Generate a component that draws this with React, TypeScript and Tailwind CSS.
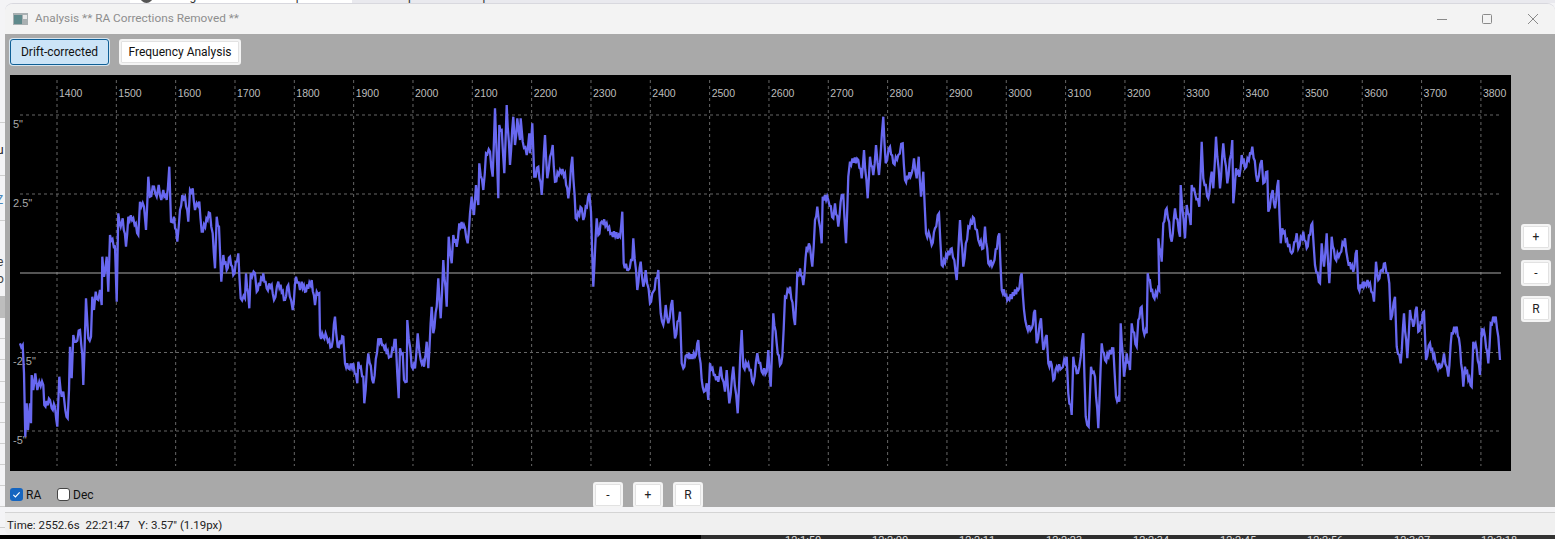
const toPoints = (ox: number, oy: number, raw: number[]) => {
  const out: [number, number][] = [];
  for (let i = 0; i < raw.length; i += 2) {
    out.push([ox + raw[i] / 3, oy + raw[i + 1] / 3]);
  }
  return out;
};

// the trace is coarser than the real 1px samples, so fill gaps with a bit of wiggle
const densify = (pts: [number, number][]) => {
  const out: string[] = [];
  pts.forEach(([x, y], i) => {
    out.push(`${x.toFixed(1)},${y.toFixed(1)}`);
    const next = pts[i + 1];
    if (!next) return;
    const n = Math.floor(Math.abs(next[0] - x) / 1.1);
    for (let k = 1; k < n; k++) {
      const t = k / n;
      const amp = 1.2 + 2.2 * Math.abs(Math.sin(i * 7.3 + k * 2.1));
      const wy = y + (next[1] - y) * t + (k % 2 ? amp : -amp);
      out.push(`${(x + (next[0] - x) * t).toFixed(1)},${wy.toFixed(1)}`);
    }
  });
  return out.join(" ");
};

// traced from the reference, in 3x crop coords
const traceA = [60,730,68,735,72,820,76,1010,80,910,84,990,90,910,93,970,95,825,100,870,106,820,112,870,118,845,130,855,133,915,150,900,155,925,165,920,172,980,178,830,185,890,190,875,196,930,203,955,207,870,210,740,215,835,220,705,228,725,240,690,247,765,250,855,258,595,265,715,273,710,277,590,282,630,287,575,295,600,300,570,305,615,307,470,312,530,320,470,325,575,330,405,345,440,350,605,355,340,362,380,368,355,378,440,385,350,400,355,415,405,420,305,432,320,438,390,445,230,450,290,462,260,470,290,476,255,484,300,490,270,500,300,508,200,513,365,522,350,532,425,540,330,547,285,555,290,565,365,570,270,578,265,585,330,590,310,598,305,605,395,630,340,638,400,645,505,650,350,657,380,664,545,670,465,680,510,690,470,700,525,715,460,722,595,735,595,738,520,748,625,752,520,765,520,770,575,790,520,800,565,815,555,822,600,835,545,855,600,865,555,878,630,888,530,900,570,905,545,915,575,935,540,945,615,950,575,958,580,960,705,970,710,980,710,995,740,1005,650,1013,740,1030,710,1035,790,1045,805,1060,790,1072,850,1075,785,1090,830,1093,910,1105,760,1120,850,1135,715,1150,735,1170,770,1187,720,1196,895];
const traceB = [0,775,8,790,12,870,20,875,22,690,35,830,45,835,53,730,62,810,72,830,80,755,85,835,95,650,100,730,110,650,115,565,122,685,130,510,140,650,146,440,155,520,160,435,170,470,178,400,195,415,203,460,210,370,215,320,222,375,228,285,235,345,238,220,250,300,258,190,270,185,278,260,285,55,295,325,298,105,305,120,313,250,320,45,330,225,340,80,345,165,352,85,360,150,362,85,368,155,380,195,388,130,390,190,397,100,403,260,415,230,425,315,435,135,442,265,450,200,458,165,465,275,480,240,495,250,505,325,517,200,527,385,545,355,550,390,568,310,573,365,580,590,590,385,595,435,605,395,620,400,635,430,660,440,667,365,671,520,685,540,697,510,700,445,712,600,722,515,730,590,737,540,750,640,760,605,775,540,782,670,790,705,797,645,805,700,817,630,825,745,840,665,845,820,850,835,860,795,885,800,895,750,905,870,912,905,920,880,925,930,930,820,945,855,955,875,962,830,975,905,980,840,988,940,1000,830,1013,970,1025,720,1030,830,1045,820,1060,880,1072,790,1085,845,1100,845,1105,780,1112,890,1120,670,1130,760,1140,825,1147,800,1155,620,1170,590,1185,705,1192,550,1200,540];
const traceC = [0,505,10,555,20,440,30,440,37,500,45,360,52,320,65,430,68,290,85,300,100,355,105,310,115,380,125,285,130,285,138,430,145,230,150,185,175,180,185,235,192,150,203,295,210,170,220,225,228,135,237,225,250,50,257,190,270,140,280,190,295,165,308,130,315,240,335,220,342,175,350,235,356,170,363,290,370,215,378,400,390,410,395,435,405,385,417,340,425,495,455,445,463,480,470,540,480,360,490,500,505,380,522,355,535,420,550,445,555,380,565,490,580,490,598,400,605,570,625,595,655,570,665,520,672,630,680,680,695,685,705,630,710,730,723,655,730,750,740,705,745,790,755,795,760,840,770,800,785,805,800,770,805,880,815,945,820,770,830,820,838,800,850,700,857,950,866,980,873,800,885,830,895,985,905,730,915,780,940,745,948,890,958,905,962,670,972,830,980,760,990,810,995,670,1010,740,1015,660,1025,620,1030,690,1040,700,1043,520,1060,590,1078,570,1075,415,1085,485,1090,370,1100,325,1115,425,1125,325,1140,410,1142,255,1155,415,1160,315,1172,375,1175,255,1185,280,1198,320];
const traceD = [155,65,160,175,175,235,185,155,190,205,198,50,210,205,220,70,232,190,247,60,250,250,258,145,268,170,275,105,285,145,300,100,307,80,322,185,335,120,340,190,352,155,355,275,368,210,375,265,385,180,392,370,397,325,425,400,440,340,445,385,460,335,470,385,487,310,495,435,510,490,515,370,522,440,530,340,538,490,545,350,555,415,570,400,585,355,593,420,610,455,620,390,625,505,645,490,660,490,672,545,678,425,685,480,695,450,705,430,718,490,722,600,735,530,740,680,752,730,762,580,772,715,780,570,790,620,800,560,805,635,822,575,828,720,840,670,860,735,875,740,882,700,895,770,905,640,920,620,930,680,940,800,945,740,965,800,970,665,980,690,990,765,995,625,1005,650,1015,730,1022,610,1037,590,1045,650,1050,720];

const wave = densify([
  ...toPoints(0, 100, traceA),
  ...toPoints(400, 90, traceB),
  ...toPoints(800, 100, traceC),
  ...toPoints(1150, 120, traceD),
]);

const gridX = Array.from({ length: 25 }, (_, i) => 1400 + i * 100);
const gridY = [
  { y: 115, label: '5"', ly: 128 },
  { y: 194, label: '2.5"', ly: 207 },
  { y: 352.5, label: '-2.5"', ly: 365 },
  { y: 431, label: '-5"', ly: 444 },
];
const behindLines = [122, 175, 220, 338, 359, 381, 402, 422, 443, 464, 485, 506, 527];
const bottomLabels = ["12:1:50", "12:2:00", "12:2:11", "12:2:23", "12:2:34", "12:2:45", "12:2:56", "12:3:07", "12:3:18"];

function Plot() {
  return (
    <svg viewBox="10 75 1501 396" className="block h-[396px] w-[1501px] bg-black">
      {gridX.map((v, i) => {
        const x = 57 + i * 59.33;
        return (
          <g key={v}>
            <line x1={x} x2={x} y1={80} y2={466} stroke="#666" strokeDasharray="3 3" />
            <text x={x + 2} y={97} fontSize="10.5" fill="#bdbdbd" className="font-['Liberation_Sans',sans-serif]">
              {v}
            </text>
          </g>
        );
      })}
      {gridY.map((g) => (
        <g key={g.label}>
          <line x1={20} x2={1500} y1={g.y} y2={g.y} stroke="#666" strokeDasharray="3 3" />
          <text x={13} y={g.ly} fontSize="11" fill="#a8a8a8" className="font-['Liberation_Sans',sans-serif]">
            {g.label}
          </text>
        </g>
      ))}
      <line x1={20} x2={1501} y1={273} y2={273} stroke="#a8a8a8" />
      <polyline points={wave} fill="none" stroke="#6868f0" strokeWidth="2.3" />
    </svg>
  );
}

function SmallButton({ label }: { label: string }) {
  return (
    <button className="flex h-[26px] w-[30px] items-center justify-center rounded-[3px] border-2 border-[#f4f4f4] bg-white text-xs text-[#222] shadow-[inset_0_0_0_1px_#e2e2e2]">
      {label}
    </button>
  );
}

export default function App() {
  return (
    <div className="relative h-[539px] w-[1555px] overflow-hidden bg-[#f4f4f6] font-['Roboto',sans-serif]">
      {/* stuff behind the window */}
      <div className="absolute left-0 top-[-12px] flex h-[15px] w-full items-end text-xs text-[#333]">
        <div className="h-full w-[130px] truncate pl-1">Rotation - Masterf...</div>
        <div className="relative h-full w-[222px] truncate bg-white pl-[32px]">
          <span className="absolute left-[10px] top-[2px] h-[13px] w-[13px] rounded-full bg-[#555]" />
          Changement de matériel pour
        </div>
        <div className="h-full flex-1 truncate bg-[#e9e9ee] pl-[36px]">Loup fait à Pixi in plus attentif</div>
      </div>
      {behindLines.map((y) => (
        <div key={y} className="absolute left-0 h-px w-[5px] bg-[#cfcfcf]" style={{ top: y }} />
      ))}
      <span className="absolute left-[-3px] top-[142px] text-xs text-[#222]">u</span>
      <span className="absolute left-[-4px] top-[192px] text-xs text-[#4a86b8]">Z</span>
      <span className="absolute left-[-3px] top-[254px] text-xs text-[#444]">e</span>
      <span className="absolute left-[-3px] top-[271px] text-xs text-[#444]">o</span>
      <div className="absolute left-0 top-[296px] h-[22px] w-[5px] bg-[#bdbdbd]" />
      <div className="absolute bottom-0 left-0 flex h-[4px] w-full overflow-hidden bg-black">
        <div className="ml-[701px] h-full w-[489px] bg-[#2e2e2e]" />
        <div className="h-full flex-1 bg-[#333]" />
        <div className="absolute left-[785px] top-0 flex text-[11px] leading-none text-[#ddd]">
          {bottomLabels.map((t) => (
            <span key={t} className="w-[87px]">
              {t}
            </span>
          ))}
        </div>
      </div>

      <div className="absolute bottom-[4px] left-[5px] right-0 top-[3px] flex flex-col overflow-hidden rounded-t-[8px] rounded-b-[6px] border-t border-[#d8d8de]">
        {/* title bar */}
        <div className="flex h-[31px] items-center bg-[#f3f3f3] pl-[8px] pr-[17px] text-[11.8px] text-[#8e8e8e]">
          <svg viewBox="0 0 15 12" className="h-[12px] w-[15px]">
            <rect width="15" height="12" fill="#a9b0b2" />
            <rect x="1" y="2" width="8" height="9" fill="#5f8a8c" />
            <rect x="10" y="2" width="4" height="4" fill="#e8e8e8" />
          </svg>
          <span className="ml-[7px]">Analysis ** RA Corrections Removed **</span>
          <svg viewBox="0 0 101 10" className="ml-auto h-[10px] w-[101px]" fill="none" stroke="#8a8a8a">
            <line x1="0" x2="10" y1="5.5" y2="5.5" />
            <rect x="45.5" y="0.5" width="9" height="9" rx="1" />
            <path d="M91 0l10 10M101 0L91 10" />
          </svg>
        </div>

        {/* body */}
        <div className="flex flex-1 flex-col bg-[#a9a9a9]">
          <div className="flex items-center gap-[10px] pl-[5px] pt-[5px]">
            <button className="h-[26px] w-[99px] rounded-[3px] border border-[#0f5f96] bg-[#cce4f7] text-xs text-[#111] shadow-[0_0_0_1px_#d8e6f0]">
              Drift-corrected
            </button>
            <button className="h-[26px] w-[122px] rounded-[3px] border-2 border-[#f4f4f4] bg-white text-xs text-[#111] shadow-[inset_0_0_0_1px_#e2e2e2]">
              Frequency Analysis
            </button>
          </div>

          <div className="mt-[10px] flex items-center pl-[5px]">
            <Plot />
            <div className="ml-[10px] flex flex-col gap-[10px]">
              <SmallButton label="+" />
              <SmallButton label="-" />
              <SmallButton label="R" />
            </div>
          </div>

          <div className="mt-[11px] flex h-[25px] items-center pl-[5px] text-xs text-[#111]">
            <span className="flex h-[13px] w-[13px] items-center justify-center rounded-[3px] bg-[#1565c0]">
              <svg viewBox="0 0 10 10" className="h-[9px] w-[9px]" fill="none" stroke="#fff" strokeWidth="1.3">
                <path d="M1.5 5.5l2.3 2.2 4.7-5" />
              </svg>
            </span>
            <span className="ml-[3px] w-[14px]">RA</span>
            <span className="ml-[17px] h-[13px] w-[13px] rounded-[3px] border border-[#444] bg-white" />
            <span className="ml-[3px] w-[20px]">Dec</span>
            <div className="ml-[500px] flex gap-[10px]">
              <SmallButton label="-" />
              <SmallButton label="+" />
              <SmallButton label="R" />
            </div>
          </div>
        </div>

        {/* status bar */}
        <div className="mt-[5px] flex h-[23px] items-center border-t border-[#d4d4d4] bg-[#f0f0f0] pl-[2px] pt-[2px] text-[11.5px] text-[#222]">
          <span className="whitespace-pre">Time: 2552.6s  22:21:47   Y: 3.57" (1.19px)</span>
        </div>
      </div>
    </div>
  );
}
